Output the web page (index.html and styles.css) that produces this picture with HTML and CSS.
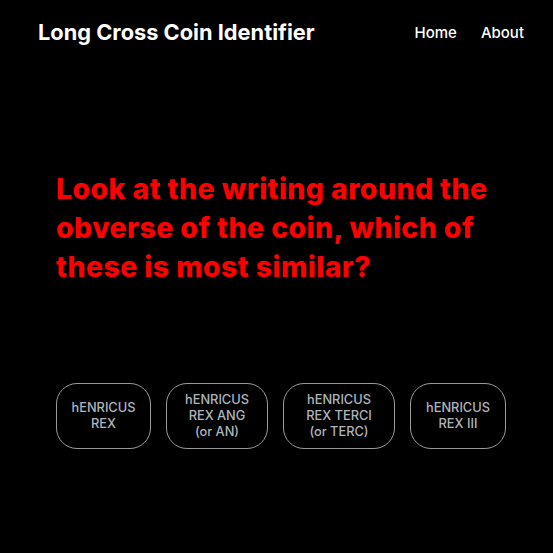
FILE: index.html
```html
<!DOCTYPE html>
<html>
<head>
<meta charset="utf-8">
<link rel="stylesheet" href="styles.css">
</head>
<body>
<header class="topbar">
  <div class="brand">Long Cross Coin Identifier</div>
  <nav class="nav">
    <a class="nav-link" href="#">Home</a>
    <a class="nav-link" href="#">About</a>
  </nav>
</header>
<main class="content">
  <h1 class="question">Look at the writing around the obverse of the coin, which of these is most similar?</h1>
  <div class="options">
    <button class="option option-a">hENRICUS<br>REX</button>
    <button class="option option-b">hENRICUS<br>REX ANG<br>(or AN)</button>
    <button class="option option-c">hENRICUS<br>REX TERCI<br>(or TERC)</button>
    <button class="option option-d">hENRICUS<br>REX III</button>
  </div>
</main>
</body>
</html>
```
FILE: styles.css
```css
html, body {
  margin: 0;
  padding: 0;
  background: #000;
  height: 100%;
}
body {
  font-family: "Inter", "Liberation Sans", sans-serif;
  color: #fff;
}
.topbar {
  display: flex;
  align-items: center;
  justify-content: space-between;
  height: 64px;
  padding: 0 29px 0 38px;
}
.brand {
  font-size: 21.8px;
  font-weight: 700;
  color: #fff;
}
.nav {
  display: flex;
  gap: 24px;
}
.nav-link {
  color: #fff;
  text-decoration: none;
  font-size: 15px;
  font-weight: 500;
}
.content {
  padding: 105px 56px 0 56px;
}
.question {
  margin: 0;
  color: #ff0000;
  font-size: 28.5px;
  font-weight: 800;
  letter-spacing: 0.4px;
  line-height: 39px;
  max-width: 450px;
}
.options {
  display: flex;
  gap: 15px;
  margin-top: 97px;
}
.option {
  flex-shrink: 0;
  box-sizing: border-box;
  height: 66px;
  padding: 0;
  background: transparent;
  border: 1px solid #9a9a9a;
  border-radius: 21px;
  color: #aeb4bc;
  font-family: "Inter", "Liberation Sans", sans-serif;
  font-size: 12.8px;
  font-weight: 500;
  line-height: 16px;
  text-align: center;
}
.option-a { width: 95px; }
.option-b { width: 102px; }
.option-c { width: 112px; }
.option-d { width: 96px; }
```
